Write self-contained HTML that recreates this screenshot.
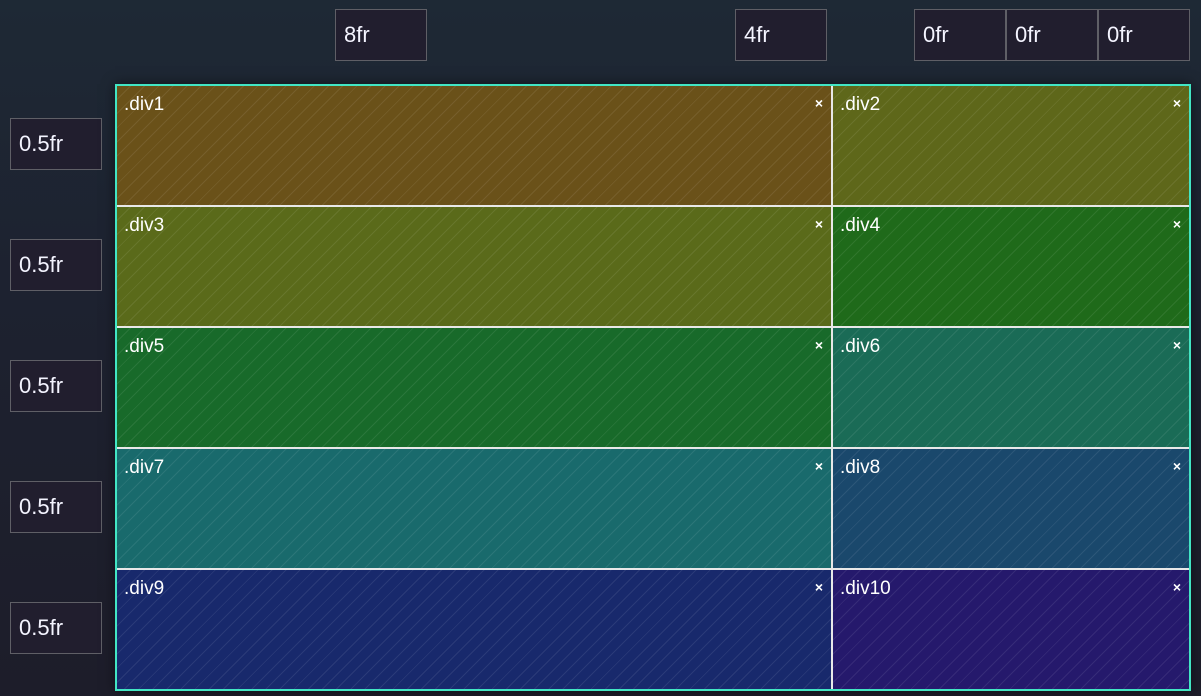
<!DOCTYPE html>
<html><head><meta charset="utf-8"><style>
html,body{margin:0;padding:0}
body{width:1201px;height:696px;overflow:hidden;position:relative;background:linear-gradient(180deg,#1e2935 0%,#1d2230 40%,#1d1d2a 100%);font-family:"Liberation Sans",sans-serif;color:#fff}
.inp{position:absolute;width:92px;height:52px;box-sizing:border-box;border:1px solid #5f5f66;background:#211e2e;font-size:22px;line-height:50px;padding-left:8px;color:#f4f4ff}
.grid{position:absolute;left:115px;top:84px;width:1076px;height:607px;box-sizing:border-box;border:2px solid #42e6c4;background:#e8e8e8;box-shadow:0 0 12px rgba(0,0,0,.5)}
.c{position:absolute;box-sizing:border-box;overflow:hidden}
.c::before{content:"";position:absolute;inset:0;background:repeating-linear-gradient(135deg,transparent 0 9px,rgba(255,255,255,.08) 9px 10px)}
.c span{position:absolute;left:7px;top:8px;font-size:19px}
.c b{position:absolute;right:8px;top:9px;font-size:14px;font-weight:bold}
</style></head><body>
<div class="inp" style="left:335px;top:9px">8fr</div>
<div class="inp" style="left:735px;top:9px">4fr</div>
<div class="inp" style="left:914px;top:9px">0fr</div>
<div class="inp" style="left:1006px;top:9px">0fr</div>
<div class="inp" style="left:1098px;top:9px">0fr</div>
<div class="inp" style="left:10px;top:118px">0.5fr</div>
<div class="inp" style="left:10px;top:239px">0.5fr</div>
<div class="inp" style="left:10px;top:360px">0.5fr</div>
<div class="inp" style="left:10px;top:481px">0.5fr</div>
<div class="inp" style="left:10px;top:602px">0.5fr</div>
<div class="grid">
<div class="c" style="left:0;top:0;width:714px;height:119px;background:#6a5119"><span>.div1</span><b>×</b></div>
<div class="c" style="left:716px;top:0;width:356px;height:119px;background:#5e671a"><span>.div2</span><b>×</b></div>
<div class="c" style="left:0;top:121px;width:714px;height:119px;background:#5a6a1a"><span>.div3</span><b>×</b></div>
<div class="c" style="left:716px;top:121px;width:356px;height:119px;background:#1f6a1a"><span>.div4</span><b>×</b></div>
<div class="c" style="left:0;top:242px;width:714px;height:119px;background:#186a2a"><span>.div5</span><b>×</b></div>
<div class="c" style="left:716px;top:242px;width:356px;height:119px;background:#1a6b56"><span>.div6</span><b>×</b></div>
<div class="c" style="left:0;top:363px;width:714px;height:119px;background:#196a6c"><span>.div7</span><b>×</b></div>
<div class="c" style="left:716px;top:363px;width:356px;height:119px;background:#1a486c"><span>.div8</span><b>×</b></div>
<div class="c" style="left:0;top:484px;width:714px;height:119px;background:#18296c"><span>.div9</span><b>×</b></div>
<div class="c" style="left:716px;top:484px;width:356px;height:119px;background:#25196c"><span>.div10</span><b>×</b></div>
</div>
</body></html>
